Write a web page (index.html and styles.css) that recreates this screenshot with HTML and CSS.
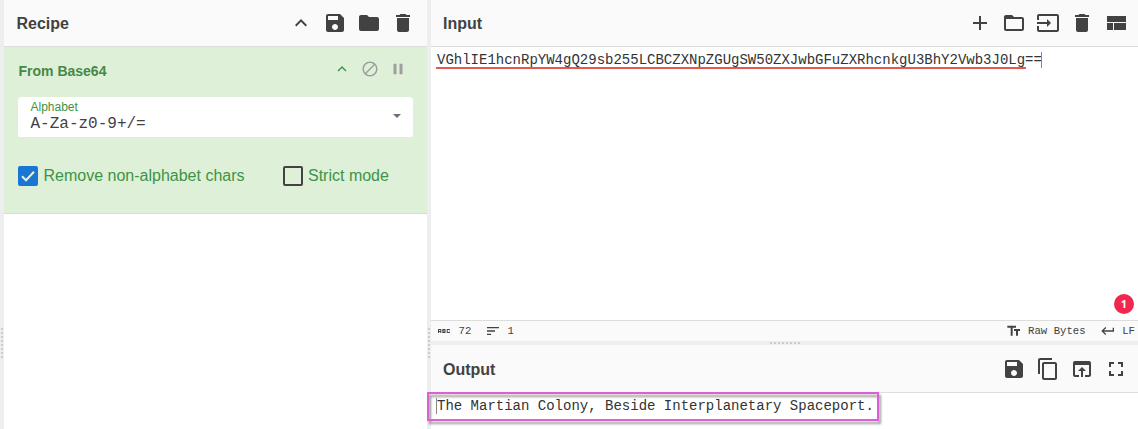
FILE: index.html
```
<!DOCTYPE html>
<html lang="en">
<head>
<meta charset="utf-8">
<title>Recipe</title>
<link rel="stylesheet" href="styles.css">
</head>
<body>
<svg class="defs">
  <symbol id="up" viewBox="0 0 24 24"><path d="M12 8l-6 6 1.41 1.41L12 10.83l4.59 4.58L18 14z"/></symbol>
  <symbol id="save" viewBox="0 0 24 24"><path d="M17 3H5c-1.11 0-2 .9-2 2v14c0 1.1.89 2 2 2h14c1.1 0 2-.9 2-2V7l-4-4zm-5 16c-1.66 0-3-1.34-3-3s1.34-3 3-3 3 1.34 3 3-1.34 3-3 3zm3-10H5V5h10v4z"/></symbol>
  <symbol id="folder" viewBox="0 0 24 24"><path d="M10 4H4c-1.1 0-1.99.9-1.99 2L2 18c0 1.1.9 2 2 2h16c1.1 0 2-.9 2-2V8c0-1.1-.9-2-2-2h-8l-2-2z"/></symbol>
  <symbol id="trash" viewBox="0 0 24 24"><path d="M6 19c0 1.1.9 2 2 2h8c1.1 0 2-.9 2-2V7H6v12zM19 4h-3.500l-1-1h-5l-1 1H5v2h14V4z"/></symbol>
  <symbol id="block" viewBox="0 0 24 24"><path d="M12 2C6.480 2 2 6.480 2 12s4.480 10 10 10 10-4.480 10-10S17.520 2 12 2zM4 12c0-4.420 3.580-8 8-8 1.850 0 3.550.630 4.900 1.690L5.690 16.900C4.630 15.550 4 13.850 4 12zm8 8c-1.850 0-3.550-.630-4.900-1.690L18.310 7.100C19.370 8.450 20 10.150 20 12c0 4.420-3.580 8-8 8z"/></symbol>
  <symbol id="pause" viewBox="0 0 24 24"><path d="M6 19h4V5H6v14zm8-14v14h4V5h-4z"/></symbol>
  <symbol id="add" viewBox="0 0 24 24"><path d="M19 13h-6v6h-2v-6H5v-2h6V5h2v6h6v2z"/></symbol>
  <symbol id="folder-open" viewBox="0 0 24 24"><path d="M20 6h-8l-2-2H4c-1.100 0-1.990.900-1.990 2L2 18c0 1.100.900 2 2 2h16c1.100 0 2-.900 2-2V8c0-1.100-.900-2-2-2zm0 12H4V8h16v10z"/></symbol>
  <symbol id="input" viewBox="0 0 24 24"><path d="M21 3.010H3c-1.100 0-2 .900-2 2V9h2V4.990h18v14.030H3V15H1v4.010c0 1.100.900 1.980 2 1.980h18c1.100 0 2-.880 2-1.980v-14c0-1.110-.900-2-2-2zM11 16l4-4-4-4v3H1v2h10v3z"/></symbol>
  <symbol id="layout" viewBox="0 0 24 24"><path d="M3 19h6v-7H3v7zm7 0h12v-7H10v7zM3 5v6h19V5H3z"/></symbol>
  <symbol id="copy" viewBox="0 0 24 24"><path d="M16 1H4c-1.100 0-2 .900-2 2v14h2V3h12V1zm3 4H8c-1.100 0-2 .900-2 2v14c0 1.100.900 2 2 2h11c1.100 0 2-.900 2-2V7c0-1.100-.900-2-2-2zm0 16H8V7h11v14z"/></symbol>
  <symbol id="browser" viewBox="0 0 24 24"><path d="M19 4H5c-1.110 0-2 .900-2 2v12c0 1.100.890 2 2 2h4v-2H5V8h14v10h-4v2h4c1.100 0 2-.900 2-2V6c0-1.100-.890-2-2-2zm-7 6l-4 4h3v6h2v-6h3l-4-4z"/></symbol>
  <symbol id="full" viewBox="0 0 24 24"><path d="M7 14H5v5h5v-2H7v-3zm-2-4h2V7h3V5H5v5zm12 7h-3v2h5v-5h-2v3zM14 5v2h3v3h2V5h-5z"/></symbol>
  <symbol id="abc" viewBox="0 0 24 24"><path d="M21 11h-1.500v-.500h-2v3h2V13H21v1c0 .550-.450 1-1 1h-3c-.550 0-1-.450-1-1v-4c0-.550.450-1 1-1h3c.550 0 1 .450 1 1v1zM8 10v5H6.500v-1.500h-2V15H3v-5c0-.550.450-1 1-1h3c.550 0 1 .450 1 1zm-1.500.500h-2V12h2v-1.500zM13.500 12c.550 0 1 .450 1 1v1c0 .550-.450 1-1 1h-4V9h4c.550 0 1 .450 1 1v1c0 .550-.450 1-1 1zM11 10.500v.750h2v-.750h-2zm2 2.250h-2v.750h2v-.750z"/></symbol>
  <symbol id="lines" viewBox="0 0 24 24"><path d="M3 18h6v-2H3v2zM3 6v2h18V6H3zm0 7h12v-2H3v2z"/></symbol>
  <symbol id="size" viewBox="0 0 24 24"><path d="M2 4v3h5v12h3V7h5V4H2zm19 5h-9v3h3v7h3v-7h3V9z"/></symbol>
  <symbol id="return" viewBox="0 0 24 24"><path d="M19 7v4H5.830l3.580-3.590L8 6l-6 6 6 6 1.410-1.410L5.830 13H21V7z"/></symbol>
</svg>
<div class="app">
  <div class="gutter gutter-v"><i class="grip"></i></div>
  <section class="recipe">
    <header class="title"><h2>Recipe</h2>
      <div class="tools"><svg><use href="#up"/></svg><svg><use href="#save"/></svg><svg><use href="#folder"/></svg><svg><use href="#trash"/></svg></div>
    </header>
    <article class="operation">
      <div class="op-head"><h3>From Base64</h3>
        <div class="op-tools"><svg class="green"><use href="#up"/></svg><svg><use href="#block"/></svg><svg><use href="#pause"/></svg></div>
      </div>
      <div class="select"><div><div class="label">Alphabet</div><div class="value">A-Za-z0-9+/=</div></div><i class="arrow"></i></div>
      <div class="checks">
        <div class="check first"><span class="box on"><svg viewBox="0 0 20 20"><path d="M4 10.200l4 4 8-8.400"/></svg></span>Remove non-alphabet chars</div>
        <div class="check"><span class="box"></span>Strict mode</div>
      </div>
    </article>
  </section>
  <div class="gutter gutter-v"><i class="grip"></i></div>
  <main class="io">
    <section class="input">
      <header class="title"><h2>Input</h2>
        <div class="tools"><svg><use href="#add"/></svg><svg><use href="#folder-open"/></svg><svg><use href="#input"/></svg><svg><use href="#trash"/></svg><svg><use href="#layout"/></svg></div>
      </header>
      <div class="editor"><span class="marked">VGhlIE1hcnRpYW4gQ29sb255LCBCZXNpZGUgSW50ZXJwbGFuZXRhcnkgU3BhY2Vwb3J0Lg</span>==<i class="caret"></i><span class="badge">1</span></div>
      <footer class="status">
        <svg><use href="#abc"/></svg><span class="count">72</span><svg><use href="#lines"/></svg><span>1</span>
        <div class="right"><svg><use href="#size"/></svg><span class="encoding">Raw Bytes</span><svg><use href="#return"/></svg><span>LF</span></div>
      </footer>
    </section>
    <div class="gutter gutter-h"><i class="grip-h"></i></div>
    <section class="output">
      <header class="title"><h2>Output</h2>
        <div class="tools"><svg><use href="#save"/></svg><svg><use href="#copy"/></svg><svg><use href="#browser"/></svg><svg><use href="#full"/></svg></div>
      </header>
      <div class="editor"><i class="caret"></i>The Martian Colony, Beside Interplanetary Spaceport.<span class="highlight"></span></div>
    </section>
  </main>
</div>
</body>
</html>
```
FILE: styles.css
```
* { box-sizing: border-box; }
body { margin: 0; overflow: hidden; background: #fff; color: #424242; font-family: "Liberation Sans", Arial, sans-serif; }
h2, h3 { margin: 0; font-size: 16px; font-weight: 700; }
svg { display: block; fill: currentColor; flex: none; }
.defs { display: none; }
.app { display: flex; width: 1138px; height: 429px; }
.gutter { flex: none; display: flex; align-items: center; justify-content: center; background: #eee; }
.gutter-v { width: 4px; padding-top: 328px; align-items: flex-start; }
.grip { width: 2px; height: 30px; background: repeating-linear-gradient(#ccc 0 2px, transparent 2px 4px); }
.gutter-h { height: 4px; }
.grip-h { width: 30px; height: 2px; background: repeating-linear-gradient(90deg, #ccc 0 2px, transparent 2px 4px); }
.recipe { width: 423px; flex: none; }
.io { flex: 1; min-width: 0; display: flex; flex-direction: column; }
.title { height: 47px; flex: none; display: flex; align-items: center; justify-content: space-between; padding: 0 10px 0 12px; background: #fafafa; border-bottom: 1px solid #ddd; }
.title h2 { padding-top: 2px; }
.recipe .title { padding: 0 12px 0 12.5px; }
.output .title { height: 48px; padding-top: 1px; }
.tools { display: flex; gap: 10px; }
.tools svg { width: 24px; height: 24px; }
.operation { height: 167px; padding: 13px 14px 0; background: #dff0d8; border-bottom: 1px solid #d0e5c3; color: #3c9446; }
.op-head { height: 18px; display: flex; align-items: center; justify-content: space-between; padding: 0 6px 0 .5px; }
.op-head h3 { font-size: 14px; color: #468847; padding-top: 4px; }
.op-tools { display: flex; gap: 10px; color: #9e9e9e; }
.op-tools svg { width: 18px; height: 18px; }
.op-tools .green { color: #3c9446; }
.select { height: 40px; margin-top: 19px; padding: 3px 12px 0 12.5px; display: flex; justify-content: space-between; background: #fff; border-radius: 4px 4px 2px 2px; }
.label { font-size: 12px; line-height: 14px; }
.value { padding-top: 1px; font: 16px/18px "Liberation Mono", monospace; color: #424242; }
.arrow { margin-top: 14px; width: 8px; height: 4px; background: #66707a; clip-path: polygon(0 0, 100% 0, 50% 100%); }
.checks { display: flex; margin-top: 29px; }
.check { display: flex; align-items: center; gap: 5px; height: 20px; font-size: 16px; white-space: nowrap; }
.first { width: 265px; gap: 5.5px; }
.box { width: 20px; height: 20px; flex: none; border: 2px solid #424242; border-radius: 2px; }
.on { border: 0; background: #1976d2; }
.on svg { width: 20px; height: 20px; fill: none; stroke: #e6f4e2; stroke-width: 2; }
.input { height: 341px; display: flex; flex-direction: column; }
.output { height: 84px; }
.editor { position: relative; flex: 1; padding: 5px 6px; font: 14px/16px "Liberation Mono", monospace; white-space: nowrap; color: #333; }
.marked { display: inline-block; height: 17px; margin: 0 -1px; padding: 0 1px; border-bottom: 2px solid #e95550; vertical-align: top; }
.caret { display: inline-block; width: 1px; height: 16px; margin-left: -1px; background: #888; vertical-align: top; }
.output .editor { padding-left: 5px; }
.output .caret { margin-left: 0; }
.badge { position: absolute; right: 4px; bottom: 6px; width: 20px; height: 20px; border-radius: 50%; background: #f1274f; color: #fff; font: 700 11px/20px "Noto Sans", sans-serif; text-align: center; }
.highlight { position: absolute; left: -4px; top: -1px; width: 452px; height: 29px; border: 2px solid #dc5ed8; filter: drop-shadow(2px 3px 1px rgba(0,0,0,.4)); }
.status { height: 21px; display: flex; align-items: center; padding: 0 3px 0 5px; border-top: 1px solid #ddd; background: #fafafa; font: 10.67px/16px "Liberation Mono", monospace; white-space: nowrap; }
.status svg { width: 16px; height: 16px; margin-right: 6.6px; }
.count { margin-right: 13.4px; }
.right { display: flex; align-items: center; margin-left: auto; }
.right svg { margin-right: 6.3px; }
.encoding { margin-right: 14.3px; }
```
